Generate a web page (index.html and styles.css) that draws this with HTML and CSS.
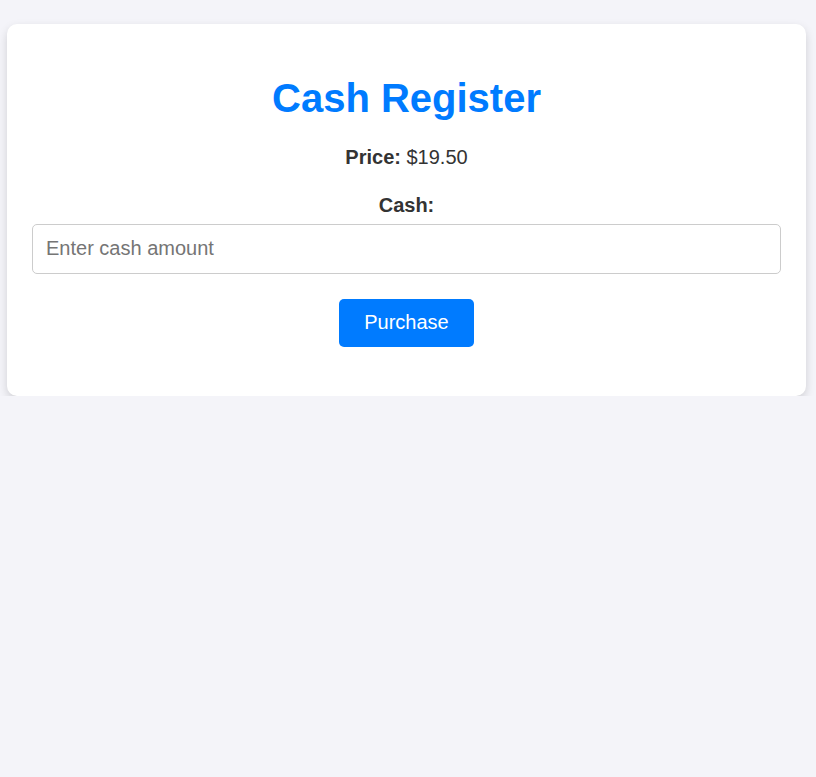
FILE: index.html
```html
<!DOCTYPE html>
<html lang="en">
<head>
<meta charset="UTF-8">
<title>Cash Register</title>
<link rel="stylesheet" href="styles.css">
</head>
<body>
<div class="container">
  <h1 class="title">Cash Register</h1>
  <p class="price"><strong>Price:</strong> $19.50</p>
  <label class="cash-label" for="cash">Cash:</label>
  <input class="cash-input" id="cash" type="number" placeholder="Enter cash amount">
  <button class="purchase-btn" id="purchase-btn">Purchase</button>
</div>
</body>
</html>
```
FILE: styles.css
```css
html, body {
  margin: 0;
  padding: 0;
}
body {
  background: #f4f4f9;
  font-family: "Liberation Sans", Arial, sans-serif;
  color: #333;
  font-size: 20px;
}
.container {
  box-sizing: border-box;
  width: 799px;
  margin: 24px 0 0 7px;
  padding: 51px 25px 49px;
  background: #fff;
  border-radius: 10px;
  box-shadow: 0 4px 10px rgba(0, 0, 0, 0.15);
  display: flex;
  flex-direction: column;
  align-items: center;
  text-align: center;
}
.title {
  margin: 0 0 25px;
  font-size: 40px;
  line-height: 46px;
  font-weight: bold;
  color: #007bff;
}
.price {
  margin: 0 0 25px;
  line-height: 23px;
}
.cash-label {
  display: block;
  font-weight: bold;
  line-height: 23px;
  margin-bottom: 7px;
}
.cash-input {
  box-sizing: border-box;
  width: 100%;
  height: 50px;
  padding: 11px 13px 13px;
  border: 1px solid #ccc;
  border-radius: 5px;
  font-family: "Liberation Sans", Arial, sans-serif;
  font-size: 20px;
  color: #333;
  margin: 0 0 25px;
  outline: none;
}
.cash-input::placeholder {
  color: #757575;
}
.purchase-btn {
  height: 48px;
  padding: 0 25px 2px;
  border: none;
  border-radius: 5px;
  background: #007bff;
  color: #fff;
  font-family: "Liberation Sans", Arial, sans-serif;
  font-size: 20px;
  cursor: pointer;
}
```
